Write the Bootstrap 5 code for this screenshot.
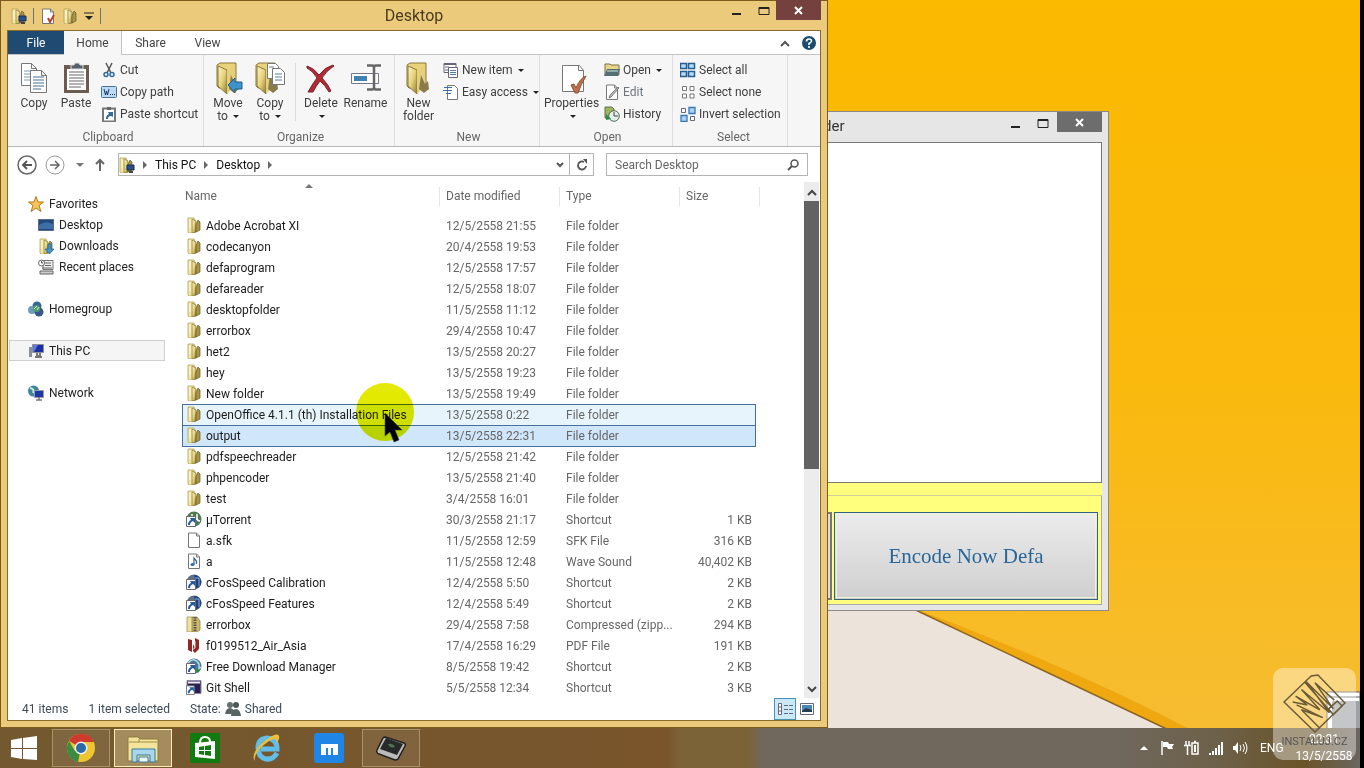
<!DOCTYPE html>
<html lang="en">
<head>
<meta charset="utf-8">
<meta name="viewport" content="width=device-width, initial-scale=1">
<title>Desktop</title>
<link href="https://cdn.jsdelivr.net/npm/bootstrap@5.3.0/dist/css/bootstrap.min.css" rel="stylesheet">
<style>
:root { --ui: Roboto, "Open Sans", sans-serif; }
body { font: 12px/16px var(--ui); color: #222; background: #000; }
button, input { font: inherit; color: inherit; }
button { background: none; border: 0; padding: 0; }
svg { display: block; flex: none; }
.i16 { width: 16px; height: 16px; }
.i32 { width: 32px; height: 32px; }

/* desktop */
.desk { margin-right: 4px; }
.wall { inset: 0; }
.taskbar { height: 40px; background: linear-gradient(90deg, #73592f 0, #78562d 40%, #7a542b 49%, #7c6237 50%, #7c6237 55%, #70685d 56%, #70685d 82%, #6d6047 90%, #6a5428 96%, #6b6660 100%); color: #fff; gap: 4px; }
.start { width: 48px; }
.task { width: 58px; height: 38px; }
.task-open { border: 1px solid #a8926a; background: #ffffff14; }
.task-on { border: 1px solid #fdeeb8; background: #d5c08e80; }
.clock { width: 60px; line-height: 17px; margin-right: 6px; }
.lang { width: 26px; }

/* windows */
.win { border: 1px solid #7b5c1c; background: #ebcb7b; left: 0; top: 0; bottom: 40px; width: 828px; padding: 0 6px 6px; z-index: 2; }
.bar { height: 29px; }
.bar-title { font-size: 16px; color: #4a3a20; }
.close-x { width: 45px; height: 20px; background: #74413f; margin-top: -1px; }
.pane { border: 1px solid #8a6a2a; background: #fff; min-height: 0; }
.quick { gap: 6px; width: 180px; }
.sep { width: 1px; background: #dcdcdc; }
.tabs { height: 24px; border-bottom: 1px solid #c3c3c3; color: #444; }
.tabs button { line-height: 24px; }
.tab-file { width: 56px; background: #1f4a72; color: #fff; }
.tab-home { width: 58px; height: 24px; background: #f6f6f6; border-right: 1px solid #c3c3c3; }
.tab-plain { width: 57px; }
.ribbon { height: 92px; background: #f6f6f6; border-bottom: 1px solid #b8b8b8; color: #3e3e3e; }
.group { border-right: 1px solid #dedede; padding-top: 4px; }
.group-body { height: 70px; }
.group-name { color: #666; }
.big { width: 42px; line-height: 13px; padding-top: 3px; }
.big svg { margin: 0 auto 3px; }
.big-mid { width: 47px; }
.big-wide { width: 57px; }
.tiny { height: 22px; gap: 3px; white-space: nowrap; }
.caret { display: inline-block; border: 3px solid transparent; border-top-color: #222; border-bottom: 0; vertical-align: 2px; margin-left: 2px; }
.g-clip { width: 196px; padding-left: 5px; }
.g-org { width: 191px; padding-left: 3px; }
.g-new { width: 145px; padding-left: 3px; }
.g-open { width: 133px; padding-left: 3px; }
.g-sel { width: 115px; padding-left: 7px; }
.addr { padding: 6px 12px 6px 8px; gap: 12px; }
.box { height: 23px; border: 1px solid #b4b4b4; background: #fff; }
.arrows { gap: 6px; }
.crumbs { color: #111; gap: 8px; }
.reload { width: 24px; height: 21px; border-left: 1px solid #b4b4b4; }
.find { width: 202px; }
.find input { border: 0; outline: 0; width: 100%; padding: 0 0 0 8px; }
.find input::placeholder { color: #666; opacity: 1; }

/* navigation and files */
.side { width: 157px; padding: 11px 0 0 1px; }
.side a { height: 21px; padding-left: 18px; gap: 5px; color: #222; text-decoration: none; border: 1px solid transparent; }
.side .sub { padding-left: 28px; }
.side .gap { margin-top: 21px; }
.side .here { background: #f5f5f5; border-color: #cfcfcf; }
.files { width: 578px; table-layout: fixed; margin-left: 17px; }
.files th { height: 33px; padding: 0 0 0 6px; font-weight: 400; color: #666; position: relative; }
.files th div { height: 19px; line-height: 19px; border-right: 1px solid #e6e6e6; margin: -5px 0 0; }
.files th:first-child { padding-left: 3px; }
.files th:nth-child(4) div { border: 0; }
.files th:last-child { padding: 0; }
.files td { height: 21px; padding: 0 0 0 6px; color: #666; white-space: nowrap; }
.files td:first-child { padding-left: 4px; color: #1c1c1c; }
.files td:first-child svg { display: inline-block; margin-right: 4px; vertical-align: -3px; }
.files td:nth-child(4) { text-align: right; padding-right: 4px; }
.c-name { width: 258px; } .c-mid { width: 120px; } .c-size { width: 76px; } .c-end { width: 4px; }
.hot td:not(:last-child) { background: #e8f4fc; box-shadow: inset 0 1px #48709a; }
.picked td:not(:last-child) { background: #cfe6fb; box-shadow: inset 0 1px #48709a, 0 1px #48709a; }
.hot td:first-child { box-shadow: inset 1px 1px #48709a; }
.hot td:nth-child(4) { box-shadow: inset -1px 1px #48709a; }
.picked td:first-child { box-shadow: inset 1px 1px #48709a, 0 1px #48709a; }
.picked td:nth-child(4) { box-shadow: inset -1px 1px #48709a, 0 1px #48709a; }
.sortmark { left: 123px; top: 2px; border: 4px solid transparent; border-bottom-color: #777; border-top: 0; }
.scroll { width: 15px; background: #ececec; padding-top: 2px; margin-right: 1px; }
.thumb { background: #626262; flex: 0 0 268px; }
.halo { left: 356px; top: 383px; z-index: 3; mix-blend-mode: multiply; }
.pointer { left: 384px; top: 412px; z-index: 4; }
.foot { height: 22px; color: #3c4a58; padding: 0 2px 0 14px; }
.view { width: 22px; height: 22px; }
.view-on { border: 1px solid #4793b8; background: #cbe8f6; }

.enc { left: 820px; top: 111px; width: 289px; height: 500px; background: #e6e6e6; border: 1px solid #8a8a8a; border-left: 0; padding-right: 6px; padding-bottom: 5px; z-index: 1; }
.enc-bar { height: 30px; }
.enc-title { font-size: 15px; color: #333; padding: 6px 0 0 3px; }
.enc-close { width: 45px; height: 20px; background: #6d6d6d; }
.enc-text { border: 1px solid #7a7a7a; border-left: 0; background: #fff; height: 341px; }
.enc-strip { height: 13px; background: #ffff7d; border-bottom: 1px solid #cfcf9c; }
.enc-foot { background: #ffff7d; border: 1px solid #aaa; border-top: 0; padding: 16px 3px 4px 0; gap: 2px; }
.enc-prev { width: 11px; border: 2px solid #777; background: #ddd; }
.enc-btn { border: 1px solid #2f6580; outline: 1px solid #f2f2d0; outline-offset: -3px; background: linear-gradient(#ececec, #cfcfcf); font: 21px/26px "Liberation Serif", serif; color: #286699; }
.stamp { right: 4px; bottom: 8px; width: 83px; height: 92px; border-radius: 10px; background: #ffffff66; z-index: 5; color: #555; padding: 6px 0 10px; font: 11px/16px Roboto, sans-serif; }
</style>
</head>
<body>
<svg width="0" height="0" class="position-absolute" aria-hidden="true">
<defs>
<linearGradient id="fg" x1="0" x2="1" y2="1"><stop stop-color="#fdf6c4"/><stop offset=".5" stop-color="#e6d27a"/><stop offset="1" stop-color="#8d7a34"/></linearGradient>
</defs>
<symbol id="folder" viewBox="0 0 16 16"><path d="M2 1h6l1 2v13H3l-1-1z" fill="#f0e6a8" stroke="#b3a257" stroke-width=".8"/><path d="M6 2l4 2v11l-4 1z" fill="url(#fg)" stroke="#857338" stroke-width=".7"/><path d="M10 8l2-5 2 2v8l-4 2z" fill="#a8954c" stroke="#66561f" stroke-width=".7"/><path d="M4 2v9" stroke="#fffbe0"/></symbol>
<symbol id="shared" viewBox="0 0 16 16"><use href="#folder" x="-1" width="16" height="16"/><path d="M8 8h7v5H8z" fill="#28508c" stroke="#1d2f55"/><path d="M10 15h4" stroke="#444" stroke-width="2"/></symbol>
<symbol id="folder32" viewBox="0 0 32 32"><path d="M5 3l3-2h16v24l-3 1H7l-2-2z" fill="#e8d37d" stroke="#8a793c"/><path d="M6 4l9 4v24l-9-8z" fill="url(#fg)" stroke="#8a793c"/><path d="M15 8l8-6v22l-8 8z" fill="#e5cf7b"/><path d="M17 27l2-14 4 9 3-3 1 8-5 4z" fill="#8a7c4a"/></symbol>
<symbol id="sheet" viewBox="0 0 16 16"><path d="M2.500 1h8l3 3v11.500h-11z" fill="#fff" stroke="#777"/><path d="M10.500 1v3h3" fill="none" stroke="#777"/></symbol>
<symbol id="short" viewBox="0 0 16 16"><path d="M.5 5.500h9v10h-9z" fill="#fff" stroke="#667"/><path d="M2 14q0-4 3-5l-1-2h5v5l-2-2q-3 1-3 4z" fill="#235c9c"/></symbol>
<symbol id="cfos" viewBox="0 0 16 16"><circle cx="8" cy="8" r="7.500" fill="#5c7285"/><path d="M8 1a7 7 0 0 1 6 11L9 15V5z" fill="#1d3f80"/><path d="M9 4h4v8" fill="none" stroke="#8cb4dc"/><use href="#short" width="16" height="16"/></symbol>
<symbol id="torrent" viewBox="0 0 16 16"><circle cx="8" cy="8" r="7.500" fill="#4f7a52"/><path d="M6 3v5q3 3 5-1V3m0 4q0 3 3 3" fill="none" stroke="#fff" stroke-width="1.500"/><use href="#short" width="16" height="16"/></symbol>
<symbol id="fdm" viewBox="0 0 16 16"><circle cx="8" cy="8" r="7.500" fill="#42789b"/><path d="M2 5q6-7 11 1v5l2-2" fill="none" stroke="#b9dcdf" stroke-width="1.500"/><path d="M9 12l3 3 3-4z" fill="#2e8b35"/><use href="#short" width="16" height="16"/></symbol>
<symbol id="git" viewBox="0 0 16 16"><path d="M1 1.500h14v13H1z" fill="#2a214f" stroke="#8f86a8"/><path d="M2 3.500h12" stroke="#eee" stroke-width="2"/><use href="#short" width="14" height="14" y="2"/></symbol>
<symbol id="wave" viewBox="0 0 16 16"><use href="#sheet" width="16" height="16"/><ellipse cx="6.500" cy="11.500" rx="2" ry="1.500" fill="#326da0"/><path d="M8 11.500V5l2.500 3v3" fill="none" stroke="#326da0" stroke-width="1.300"/></symbol>
<symbol id="zip" viewBox="0 0 16 16"><path d="M1 1h5l2 2v13H1z" fill="#f0e29a" stroke="#9a8848" stroke-width=".7"/><path d="M6 1h5l3 4v9l-3 2H6z" fill="#cdbb6a" stroke="#857338" stroke-width=".7"/><path d="M9 1v14" stroke="#555" stroke-width="3" stroke-dasharray="1.500 1"/></symbol>
<symbol id="pdf" viewBox="0 0 16 16"><path d="M2 2l4 1v12l-4-2zM7 7l2 4V1l4 2v9l-4 4-2-2z" fill="#8d2826"/><path d="M9 4v7q-2 2-3 0" fill="none" stroke="#f1d4d0"/></symbol>
<symbol id="pc" viewBox="0 0 16 16"><path d="M1 4h3v10H1z" fill="#8a8f98"/><path d="M4.500 1.500h11v8h-11z" fill="#1b2fa5" stroke="#8a8f98"/><path d="M5 2h5l-4 7H5z" fill="#5c78dc"/><path d="M9 10v3h3v-3M7 14h7" stroke="#777" stroke-width="2" fill="none"/></symbol>
<symbol id="people" viewBox="0 0 16 16"><circle cx="5" cy="4" r="3" fill="#66716f"/><circle cx="11" cy="4" r="3" fill="#4c5857"/><path d="M0 13q1-6 5-6t5 6zM6 15q1-7 5-7t5 7z" fill="#586563"/></symbol>
</svg>

<div class="desk position-relative vh-100 overflow-hidden d-flex flex-column justify-content-end">
  <svg class="wall position-absolute w-100 h-100" viewBox="0 0 1360 768" preserveAspectRatio="none" aria-hidden="true">
    <defs><linearGradient id="sky" x2="0" y2="1"><stop stop-color="#fbb900"/><stop offset=".5" stop-color="#fab90d"/><stop offset="1" stop-color="#f6bd36"/></linearGradient></defs>
    <path d="M0 0h1360v768H0z" fill="url(#sky)"/>
    <path d="M905 605Q1080 670 1210 740H1170z" fill="#f0a811"/>
    <path d="M0 605h905L1190 740H0z" fill="#ece3da"/>
    <path d="M905 605l285 135" stroke="#8a6420" stroke-width="1.500"/>
    <path d="M1327 692h33v40h-33z" fill="#fff" stroke="#555"/><path d="M1332 701h28v30h-28z" fill="#9fa1a4"/><path d="M1328 697h32" stroke="#555"/>
  </svg>

  <section class="enc position-absolute d-flex flex-column">
    <div class="enc-bar d-flex flex-shrink-0">
      <span class="enc-title flex-grow-1">der</span>
      <button aria-label="Minimize" class="px-2 pb-2"><svg width="10" height="14"><path d="M0 11h9" stroke="#222" stroke-width="2"/></svg></button>
      <button aria-label="Maximize" class="px-2 pb-2"><svg width="12" height="14"><path d="M1 3.500h10v8H1zM1 4.500h10" fill="none" stroke="#222"/></svg></button>
      <button aria-label="Close" class="enc-close"><svg class="m-auto" width="9" height="9"><path d="M1 1l7 7M8 1L1 8" stroke="#fff" stroke-width="2"/></svg></button>
    </div>
    <div class="enc-text flex-shrink-0"></div>
    <div class="enc-strip flex-shrink-0"></div>
    <div class="enc-foot flex-grow-1 d-flex">
      <div class="enc-prev"></div>
      <button class="enc-btn flex-grow-1">Encode Now Defa</button>
    </div>
  </section>

  <main class="win position-absolute d-flex flex-column">
    <header class="bar d-flex flex-shrink-0">
      <div class="quick d-flex align-items-center ps-1">
        <svg class="i16"><use href="#shared"/></svg><i class="sep py-2 bg-secondary"></i>
        <button aria-label="Properties"><svg class="i16"><use href="#sheet"/><path d="M8 10l2 4 4-7" fill="none" stroke="#b7412f" stroke-width="2"/></svg></button>
        <button aria-label="New folder"><svg class="i16"><use href="#folder"/></svg></button>
        <button aria-label="Customize"><svg width="10" height="10"><path d="M0 2h10" stroke="#222"/><path d="M1 5h8L5 9z" fill="#222"/></svg></button>
        <i class="sep py-2 bg-secondary"></i>
      </div>
      <div class="bar-title flex-grow-1 d-flex justify-content-center align-items-center">Desktop</div>
      <div class="quick d-flex justify-content-end align-items-start">
        <div class="d-flex gap-3">
          <button aria-label="Minimize"><svg width="10" height="18"><path d="M0 13h9" stroke="#222" stroke-width="2"/></svg></button>
          <button aria-label="Maximize"><svg width="12" height="18"><path d="M1 6.500h10v7H1zM1 7.500h10" fill="none" stroke="#222"/></svg></button>
        </div>
        <button aria-label="Close" class="close-x"><svg class="m-auto" width="9" height="9"><path d="M1 1l7 7M8 1L1 8" stroke="#fff" stroke-width="2"/></svg></button>
      </div>
    </header>

    <div class="pane flex-grow-1 d-flex flex-column">
      <nav class="tabs d-flex flex-shrink-0">
        <button class="tab-file">File</button><button class="tab-home">Home</button><button class="tab-plain">Share</button><button class="tab-plain">View</button>
        <span class="ms-auto d-flex align-items-center gap-2 pe-1">
          <button aria-label="Collapse ribbon" class="pe-1"><svg width="10" height="8"><path d="M1 7l4-4 4 4" fill="none" stroke="#555" stroke-width="2"/></svg></button>
          <button aria-label="Help"><svg width="14" height="14" viewBox="0 0 14 14"><circle cx="7" cy="7" r="7" fill="#1b4d70"/><path d="M4.500 5.500q0-2.500 2.500-2.500t2.500 2q0 1.500-2.500 2.500v1.500M7 10v2" fill="none" stroke="#fff" stroke-width="1.600"/></svg></button>
        </span>
      </nav>

      <div class="ribbon d-flex flex-shrink-0">
        <div class="group g-clip">
          <div class="group-body d-flex">
            <button class="big align-self-start"><svg class="i32" viewBox="0 0 32 32"><path d="M3.500 1.500h10l5 5v17h-15zM13.500 1.500v5h5" fill="#fff" stroke="#777"/><path d="M6 9h7M6 12h7M6 15h7M6 18h7" stroke="#7f9bb3"/><path d="M12.500 8.500h11l5 5v17h-16zM23.500 8.500v5h5" fill="#fff" stroke="#777"/><path d="M15 15h11M15 18h11M15 21h11M15 24h11M15 27h8" stroke="#456f91"/></svg>Copy</button>
            <button class="big align-self-start"><svg class="i32" viewBox="0 0 32 32"><path d="M4 3h25v28H4z" fill="#6c5b50"/><path d="M7 7h19v21H7z" fill="#fff"/><path d="M9 10h15M9 13h15M9 16h15M9 19h15M9 22h15M9 25h12" stroke="#666"/><path d="M11 3h3l1-2h4l1 2h3v4H11z" fill="#55606a" stroke="#ddd"/></svg>Paste</button>
            <div class="ms-1">
              <button class="tiny d-flex align-items-center"><svg class="i16" viewBox="0 0 16 16"><path d="M5 1l5 10M11 1L6 11" stroke="#555" stroke-width="1.500"/><circle cx="5" cy="12.500" r="2" fill="none" stroke="#2f6b9c" stroke-width="1.500"/><circle cx="11" cy="12.500" r="2" fill="none" stroke="#2f6b9c" stroke-width="1.500"/></svg>Cut</button>
              <button class="tiny d-flex align-items-center"><svg class="i16" viewBox="0 0 16 16"><rect x=".5" y="2.500" width="15" height="11" rx="1" fill="#bcd9f5" stroke="#41749e"/><path d="M3 5l1.500 6 1-4 1 4L8 5M9 10.500h1M11 10.500h1M13 10.500h1" fill="none" stroke="#153a63"/></svg>Copy path</button>
              <button class="tiny d-flex align-items-center"><svg class="i16" viewBox="0 0 16 16"><path d="M2 2.500h12v13H2z" fill="#fff" stroke="#777" stroke-width="2"/><path d="M6 1h4v3H6z" fill="#666"/><path d="M5 13q0-4 3-5L7 6h5v5l-2-1q-3 0-3 3z" fill="#326a9b"/></svg>Paste shortcut</button>
            </div>
          </div>
          <div class="group-name text-center">Clipboard</div>
        </div>
        <div class="group g-org">
          <div class="group-body d-flex">
            <button class="big align-self-start"><svg class="i32" viewBox="0 0 32 32"><use href="#folder32" width="32" height="32"/><path d="M16 23l7-7v4h7v7h-7v4z" fill="#3f93cb" stroke="#235f8c"/></svg>Move<br>to <i class="caret"></i></button>
            <button class="big align-self-start"><svg class="i32" viewBox="0 0 32 32"><use href="#folder32" x="-3" width="32" height="32"/><path d="M13.500 1.500h8l3 3v12h-11z" fill="#fff" stroke="#777"/><path d="M18.500 6.500h8l4 4v12h-12z" fill="#fff" stroke="#777"/><path d="M21 12h7M21 15h7M21 18h7M15 5h5" stroke="#58809f"/></svg>Copy<br>to <i class="caret"></i></button>
            <i class="sep mx-1 mb-2 mt-1"></i>
            <button class="big align-self-start"><svg class="i32" viewBox="0 0 32 32"><path d="M2 4q7 2 12 9Q20 5 28 3l1 1q-8 5-12 12 6 6 9 13l-2 1q-4-7-9-11-4 5-7 11H3Q8 21 12 16 8 9 2 6z" fill="#af2a33" stroke="#81242b"/></svg>Delete<br><i class="caret"></i></button>
            <button class="big big-mid align-self-start"><svg class="i32" viewBox="0 0 32 32"><path d="M1.500 11.500h27v10h-27z" fill="#fff" stroke="#778"/><path d="M4 14h13v5H4z" fill="#3f83b5"/><path d="M17 3.500h5q2 0 2 2v20q0 2-2 2h-5M31 3.500h-5q-2 0-2 2v20q0 2 2 2h5" fill="none" stroke="#666" stroke-width="2.500"/></svg>Rename</button>
          </div>
          <div class="group-name text-center">Organize</div>
        </div>
        <div class="group g-new">
          <div class="group-body d-flex">
            <button class="big align-self-start"><svg class="i32"><use href="#folder32"/></svg>New<br>folder</button>
            <div class="ms-1">
              <button class="tiny d-flex align-items-center"><svg class="i16" viewBox="0 0 16 16"><path d="M1 1.500h12v9H1z" fill="#fff" stroke="#667"/><path d="M1 2.500h12M2 5h4M2 8h3" stroke="#667"/><path d="M5.500 5.500h9v10h-9z" fill="#fff" stroke="#667"/><path d="M7 8.500h6M7 10.500h6M7 12.500h6" stroke="#557d9c"/></svg>New item<i class="caret"></i></button>
              <button class="tiny d-flex align-items-center"><svg class="i16" viewBox="0 0 16 16"><path d="M4.500 1.500h7l3 3v11h-10z" fill="#fff" stroke="#777"/><path d="M1 3.500h8M0 6.500h9M3 9.500h5" stroke="#3d6fa8"/></svg>Easy access<i class="caret"></i></button>
            </div>
          </div>
          <div class="group-name text-center">New</div>
        </div>
        <div class="group g-open">
          <div class="group-body d-flex">
            <button class="big big-wide align-self-start"><svg class="i32" viewBox="0 0 32 32"><path d="M6.500 3.500h17l4 5v21h-21zM22.500 3.500v5h5" fill="#fff" stroke="#777"/><path d="M15 23l3-1 2 4q4-10 10-12-5 8-8 17h-3z" fill="#bd724d" stroke="#8c5237"/></svg>Properties<br><i class="caret"></i></button>
            <div class="ms-1">
              <button class="tiny d-flex align-items-center"><svg class="i16" viewBox="0 0 16 16"><path d="M1 2h5l1 1h8v10H1z" fill="#e6d589" stroke="#7e7146"/><path d="M0 14l3-7h13l-2 7z" fill="#546e76"/><path d="M3 9h11" stroke="#d5e6d6"/></svg>Open <i class="caret"></i></button>
              <button class="tiny d-flex align-items-center text-secondary"><svg class="i16"><use href="#sheet"/><path d="M5 14l1-3 8-8 1 1-8 9z" fill="#bbb" stroke="#666" stroke-width=".8"/></svg>Edit</button>
              <button class="tiny d-flex align-items-center"><svg class="i16" viewBox="0 0 16 16"><path d="M1 1h7l2 2v9H1z" fill="#9cb55e" stroke="#667043"/><circle cx="10" cy="10" r="5.300" fill="#e6f0e9" stroke="#4f6a5c"/><path d="M10 6v4h4" fill="none" stroke="#444"/><path d="M2 8l5 5-5 1z" fill="#2b8a43"/></svg>History</button>
            </div>
          </div>
          <div class="group-name text-center">Open</div>
        </div>
        <div class="group g-sel">
          <div class="group-body">
            <button class="tiny d-flex align-items-center"><svg class="i16" viewBox="0 0 16 16"><path d="M.5 1.500h6v5h-6zM8.500 1.500h6v5h-6zM.5 9.500h6v5h-6zM8.500 9.500h6v5h-6z" fill="#b5dafa" stroke="#235f94" stroke-width="1.500"/></svg>Select all</button>
            <button class="tiny d-flex align-items-center"><svg class="i16" viewBox="0 0 16 16"><path d="M2.500 2.500h4v4h-4zM10 2.500h4v4h-4zM2.500 10h4v4h-4zM10 10h4v4h-4z" fill="#fff" stroke="#777"/></svg>Select none</button>
            <button class="tiny d-flex align-items-center"><svg class="i16" viewBox="0 0 16 16"><path d="M1.500 2.500h4v4h-4zM10.500 10.500h4v4h-4z" fill="#fff" stroke="#667"/><path d="M9 1.500h6v6H9zM1 9.500h6v6H1z" fill="#a9d0f5" stroke="#3579b5" stroke-width="1.300"/></svg>Invert selection</button>
          </div>
          <div class="group-name text-center">Select</div>
        </div>
      </div>

      <div class="addr d-flex flex-shrink-0 align-items-center">
        <div class="arrows d-flex align-items-center">
          <button aria-label="Back"><svg width="22" height="22"><circle cx="11" cy="11" r="9" fill="none" stroke="#666" stroke-width="1.500"/><path d="M16 11H7m4-4l-4 4 4 4" fill="none" stroke="#555" stroke-width="2"/></svg></button>
          <button aria-label="Forward"><svg width="22" height="22"><circle cx="11" cy="11" r="9" fill="none" stroke="#999"/><path d="M6 11h9m-4-4l4 4-4 4" fill="none" stroke="#666" stroke-width="1.500"/></svg></button>
          <button aria-label="Recent" class="px-1"><svg width="8" height="6"><path d="M0 1h8L4 5z" fill="#777"/></svg></button>
          <button aria-label="Up"><svg width="12" height="14"><path d="M6 13V2M2 6l4-4 4 4" fill="none" stroke="#666" stroke-width="2"/></svg></button>
        </div>
        <div class="box flex-grow-1 d-flex align-items-center">
          <div class="crumbs d-flex align-items-center flex-grow-1">
            <svg class="i16"><use href="#shared"/></svg><svg width="4" height="8"><path d="M0 0l4 4-4 4z" fill="#666"/></svg>This PC<svg width="4" height="8"><path d="M0 0l4 4-4 4z" fill="#666"/></svg>Desktop<svg width="4" height="8"><path d="M0 0l4 4-4 4z" fill="#666"/></svg>
          </div>
          <button aria-label="Previous locations" class="pe-1"><svg width="9" height="8"><path d="M1 2l3 3 3-3" fill="none" stroke="#555" stroke-width="2"/></svg></button>
          <button aria-label="Refresh" class="reload"><svg class="m-auto" width="12" height="12"><path d="M10 7a4 4 0 1 1-2-4" fill="none" stroke="#555" stroke-width="1.800"/><path d="M7 0h4v5z" fill="#555"/></svg></button>
        </div>
        <div class="box find d-flex align-items-center pe-1">
          <input type="text" placeholder="Search Desktop" aria-label="Search Desktop">
          <svg class="me-1" width="12" height="12"><circle cx="7.500" cy="4.500" r="3.500" fill="none" stroke="#555" stroke-width="1.500"/><path d="M5 7l-4 4" stroke="#555" stroke-width="2"/></svg>
        </div>
      </div>

      <div class="d-flex flex-grow-1 overflow-hidden">
        <nav class="side flex-shrink-0">
          <a href="#" class="d-flex align-items-center"><svg class="i16" viewBox="0 0 16 16"><path d="M8 .5l2 5.500h5.500L11 9.500l2 6-5-3.500-5 3.500 2-6L.5 6H6z" fill="#f8c654" stroke="#b3761e"/></svg>Favorites</a>
          <a href="#" class="sub d-flex align-items-center"><svg class="i16" viewBox="0 0 16 16"><path d="M.5 2.500h15v11H.5z" fill="#23487d" stroke="#556b86"/><path d="M1 8q7-5 14-1v5H1z" fill="#3d6ea5"/></svg>Desktop</a>
          <a href="#" class="sub d-flex align-items-center"><svg class="i16"><use href="#folder"/><path d="M10 6h3v5h3l-4.500 5L7 11h3z" fill="#3f95d0" stroke="#1f6394" stroke-width=".7"/></svg>Downloads</a>
          <a href="#" class="sub d-flex align-items-center"><svg class="i16" viewBox="0 0 16 16"><path d="M5 1.500h10v9H5z" fill="#eee" stroke="#777"/><path d="M7 4h6M7 6.500h6M2 12h13v3H2zM4 9h10" stroke="#666" fill="#ccc"/><circle cx="3.500" cy="4" r="3" fill="#fff" stroke="#666"/><path d="M3.500 2v2h1.500" stroke="#555" fill="none"/></svg>Recent places</a>
          <a href="#" class="gap d-flex align-items-center"><svg class="i16" viewBox="0 0 16 16"><circle cx="9" cy="5" r="4.500" fill="#36659b"/><circle cx="4" cy="9" r="4" fill="#6d9cc2"/><circle cx="11" cy="11" r="4.500" fill="#38598b"/><circle cx="8.500" cy="7.500" r="3.500" fill="#4f9c63"/><path d="M6 8l3-3M9 9l2-3" stroke="#d8f0da"/></svg>Homegroup</a>
          <a href="#" class="gap here d-flex align-items-center"><svg class="i16"><use href="#pc"/></svg>This PC</a>
          <a href="#" class="gap d-flex align-items-center"><svg class="i16" viewBox="0 0 16 16"><circle cx="5.500" cy="6" r="5.500" fill="#3b8698"/><path d="M2 3q5 1 3 5" stroke="#c5e9e2" fill="none" stroke-width="2"/><path d="M6.500 5.500h9v7h-9z" fill="#1f36a8" stroke="#99a"/><path d="M8 15h6M11 12v3" stroke="#777" stroke-width="1.500"/></svg>Network</a>
        </nav>

        <table class="files mb-auto">
          <colgroup><col class="c-name"><col class="c-mid"><col class="c-mid"><col class="c-size"><col class="c-end"></colgroup>
          <thead><tr><th><i class="sortmark position-absolute"></i><div>Name</div></th><th><div>Date modified</div></th><th><div>Type</div></th><th><div>Size</div></th><th><div>&nbsp;</div></th></tr></thead>
          <tbody>
            <tr><td><svg class="i16"><use href="#folder"/></svg>Adobe Acrobat XI</td><td>12/5/2558 21:55</td><td>File folder</td><td></td><td></td></tr>
            <tr><td><svg class="i16"><use href="#folder"/></svg>codecanyon</td><td>20/4/2558 19:53</td><td>File folder</td><td></td><td></td></tr>
            <tr><td><svg class="i16"><use href="#folder"/></svg>defaprogram</td><td>12/5/2558 17:57</td><td>File folder</td><td></td><td></td></tr>
            <tr><td><svg class="i16"><use href="#folder"/></svg>defareader</td><td>12/5/2558 18:07</td><td>File folder</td><td></td><td></td></tr>
            <tr><td><svg class="i16"><use href="#folder"/></svg>desktopfolder</td><td>11/5/2558 11:12</td><td>File folder</td><td></td><td></td></tr>
            <tr><td><svg class="i16"><use href="#folder"/></svg>errorbox</td><td>29/4/2558 10:47</td><td>File folder</td><td></td><td></td></tr>
            <tr><td><svg class="i16"><use href="#folder"/></svg>het2</td><td>13/5/2558 20:27</td><td>File folder</td><td></td><td></td></tr>
            <tr><td><svg class="i16"><use href="#folder"/></svg>hey</td><td>13/5/2558 19:23</td><td>File folder</td><td></td><td></td></tr>
            <tr><td><svg class="i16"><use href="#folder"/></svg>New folder</td><td>13/5/2558 19:49</td><td>File folder</td><td></td><td></td></tr>
            <tr class="hot"><td><svg class="i16"><use href="#folder"/></svg>OpenOffice 4.1.1 (th) Installation Files</td><td>13/5/2558 0:22</td><td>File folder</td><td></td><td></td></tr>
            <tr class="picked"><td><svg class="i16"><use href="#folder"/></svg>output</td><td>13/5/2558 22:31</td><td>File folder</td><td></td><td></td></tr>
            <tr><td><svg class="i16"><use href="#folder"/></svg>pdfspeechreader</td><td>12/5/2558 21:42</td><td>File folder</td><td></td><td></td></tr>
            <tr><td><svg class="i16"><use href="#folder"/></svg>phpencoder</td><td>13/5/2558 21:40</td><td>File folder</td><td></td><td></td></tr>
            <tr><td><svg class="i16"><use href="#folder"/></svg>test</td><td>3/4/2558 16:01</td><td>File folder</td><td></td><td></td></tr>
            <tr><td><svg class="i16"><use href="#torrent"/></svg>µTorrent</td><td>30/3/2558 21:17</td><td>Shortcut</td><td>1 KB</td><td></td></tr>
            <tr><td><svg class="i16"><use href="#sheet"/></svg>a.sfk</td><td>11/5/2558 12:59</td><td>SFK File</td><td>316 KB</td><td></td></tr>
            <tr><td><svg class="i16"><use href="#wave"/></svg>a</td><td>11/5/2558 12:48</td><td>Wave Sound</td><td>40,402 KB</td><td></td></tr>
            <tr><td><svg class="i16"><use href="#cfos"/></svg>cFosSpeed Calibration</td><td>12/4/2558 5:50</td><td>Shortcut</td><td>2 KB</td><td></td></tr>
            <tr><td><svg class="i16"><use href="#cfos"/></svg>cFosSpeed Features</td><td>12/4/2558 5:49</td><td>Shortcut</td><td>2 KB</td><td></td></tr>
            <tr><td><svg class="i16"><use href="#zip"/></svg>errorbox</td><td>29/4/2558 7:58</td><td>Compressed (zipp...</td><td>294 KB</td><td></td></tr>
            <tr><td><svg class="i16"><use href="#pdf"/></svg>f0199512_Air_Asia</td><td>17/4/2558 16:29</td><td>PDF File</td><td>191 KB</td><td></td></tr>
            <tr><td><svg class="i16"><use href="#fdm"/></svg>Free Download Manager</td><td>8/5/2558 19:42</td><td>Shortcut</td><td>2 KB</td><td></td></tr>
            <tr><td><svg class="i16"><use href="#git"/></svg>Git Shell</td><td>5/5/2558 12:34</td><td>Shortcut</td><td>3 KB</td><td></td></tr>
          </tbody>
        </table>

        <div class="scroll ms-auto d-flex flex-column align-items-center flex-shrink-0">
          <svg width="15" height="17"><path d="M4 11l4-4 4 4" fill="none" stroke="#444" stroke-width="2"/></svg>
          <div class="thumb w-100"></div>
          <svg class="mt-auto" width="15" height="17"><path d="M4 6l4 4 4-4" fill="none" stroke="#444" stroke-width="2"/></svg>
        </div>
      </div>

      <footer class="foot d-flex flex-shrink-0 align-items-center">
        <span>41 items</span><span class="ms-3 ps-1">1 item selected</span>
        <span class="ms-3 ps-1 d-flex gap-1">State: <svg class="i16"><use href="#people"/></svg> Shared</span>
        <span class="ms-auto d-flex">
          <button aria-label="Details view" class="view view-on"><svg class="mx-auto" width="16" height="14"><path d="M1.500 1.500h3v11h-3zM1 5h4M1 9h4" fill="#fff" stroke="#667"/><path d="M7 3.500h9M7 7.500h9M7 11.500h9" stroke="#667" stroke-dasharray="4 1"/></svg></button>
          <button aria-label="Large icons" class="view"><svg class="mx-auto" width="14" height="12"><path d="M.5.500h13v11H.5z" fill="#fff" stroke="#667"/><path d="M2 2h10v7H2z" fill="#4c86b8"/><path d="M2 8l4-3 6 2v2H2z" fill="#213f4d"/></svg></button>
        </span>
      </footer>
    </div>
  </main>

  <svg class="halo position-absolute" width="58" height="58"><circle cx="29" cy="29" r="29" fill="#e3e900"/></svg>
  <svg class="pointer position-absolute" width="20" height="32"><path d="M1 1v23l5-4 4 10 5-2-4-10h7z" fill="#000" stroke="#444" stroke-width=".6"/></svg>

  <nav class="taskbar position-relative d-flex align-items-center">
    <button aria-label="Start" class="start"><svg class="m-auto" width="28" height="26"><path d="M1 5l11-2v10H1zM13 3l14-2v12H13zM1 14h11v10L1 22zM13 14h14v11l-14-1z" fill="#fff"/></svg></button>
    <button aria-label="Chrome" class="task task-open"><svg class="m-auto" width="30" height="30" viewBox="0 0 30 30"><circle cx="15" cy="15" r="14" fill="#f0c431"/><path d="M15 15L3 8a14 14 0 0 1 25 1H15z" fill="#cf3a2e"/><path d="M15 15l-3 14A14 14 0 0 1 3 8l6 10z" fill="#3b8c41"/><circle cx="15" cy="15" r="6.500" fill="#eee"/><circle cx="15" cy="15" r="5" fill="#2b6ca5"/></svg></button>
    <button aria-label="File Explorer" class="task task-on"><svg class="m-auto" width="32" height="32" viewBox="0 0 32 32"><path d="M1 5h10l2 2h18v22H1z" fill="#f3e39b" stroke="#8d7b3d"/><path d="M2 10h28M12 7v3" stroke="#a28e4b"/><path d="M5 17h23v13h-5v-7H10v7H5z" fill="#a9d6ec" stroke="#357aa0"/><path d="M12 25h9v5h-9z" fill="#edf8fc" stroke="#357aa0"/></svg></button>
    <button aria-label="Store" class="task"><svg class="m-auto" width="30" height="30"><path d="M0 0h30v30H0z" fill="#117a10"/><path d="M5 10l20-2v18L5 24z" fill="#fff"/><path d="M10 10q0-6 5-6t5 5" fill="none" stroke="#fff" stroke-width="2"/><path d="M9 14l5-1v4H9zM15 13l6-1v5h-6zM9 18h5v4l-5-1zM15 18h6v5l-6-1z" fill="#117a10"/></svg></button>
    <button aria-label="Internet Explorer" class="task"><svg class="m-auto" width="30" height="30"><path d="M25 20Q21 27 14 26 6 24 6 15t9-10q10 1 10 11H9" fill="none" stroke="#62bde8" stroke-width="5"/><path d="M3 28Q-2 22 10 10 25-2 27 3q1 3-3 8Q26 3 17 8 1 19 3 28z" fill="#eac13c"/></svg></button>
    <button aria-label="Maxthon" class="task"><svg class="m-auto" width="30" height="30"><rect width="30" height="30" rx="3" fill="#1f86e8"/><path d="M7 22V11h17v11h-5v-7h-2v7h-3v-7h-2v7z" fill="#fff"/></svg></button>
    <button aria-label="Recorder" class="task task-open"><svg class="m-auto" width="30" height="28"><path d="M9 3l19 6q2 1 1 3l-7 13q-1 1-3 1L3 20q-3-1-2-4L7 4q1-1 2-1z" fill="#bbb" stroke="#222" stroke-width="1.500"/><path d="M10 4l17 6-6 11-17-6z" fill="#262a29"/><path d="M12 10q5-1 7 3-5 2-7-3z" fill="#52734c"/></svg></button>

    <div class="ms-auto d-flex align-items-center gap-2">
      <svg width="8" height="6"><path d="M0 5h8L4 1z" fill="#fff"/></svg>
      <svg class="ms-1" width="16" height="16"><path d="M2 1v14" stroke="#fff" stroke-width="1.500"/><path d="M3 2h5l1 2h5l-2 3 1 2H8L7 7H3z" fill="#fff"/></svg>
      <svg width="16" height="16"><path d="M2 1v4M5 1v4M0 5.500h7M3.500 6v9" stroke="#fff" stroke-width="1.500"/><path d="M8 3h6v11H8zM10 1.500h2" fill="none" stroke="#fff" stroke-width="1.500"/><path d="M10 5h2v7h-2z" fill="#fff"/></svg>
      <svg width="16" height="16"><path d="M2 13v2M5 11v4M8 8v7M11 5v10M14 2v13" stroke="#fff" stroke-width="2"/></svg>
      <svg class="me-1" width="16" height="16"><path d="M1 6h2l3-4v12l-3-4H1z" fill="#fff"/><path d="M8 5q2 3 0 6M11 4q3 4 0 8M13 2q4 6 0 12" fill="none" stroke="#fff"/></svg>
      <span class="lang">ENG</span>
      <div class="clock text-center">22:31<br>13/5/2558</div>
    </div>
  </nav>

  <aside class="stamp position-absolute d-flex flex-column align-items-center justify-content-between">
    <svg width="68" height="60" viewBox="0 0 68 62" fill="none" stroke="#6b5a38" stroke-width="1.500"><path d="M30 2L2 29l32 31 31-30L37 1zM11 29l15 3-12-9 25 14-19-21 29 24-24-32 28 28-19-27 20 18M15 32l27 13-22-8 18 18M48 36l9-8 5 5-9 9zM23 8l30 34"/></svg>
    <span>INSTALUJ.CZ</span>
  </aside>
</div>
<script src="https://cdn.jsdelivr.net/npm/bootstrap@5.3.0/dist/js/bootstrap.bundle.min.js"></script>
</body>
</html>
